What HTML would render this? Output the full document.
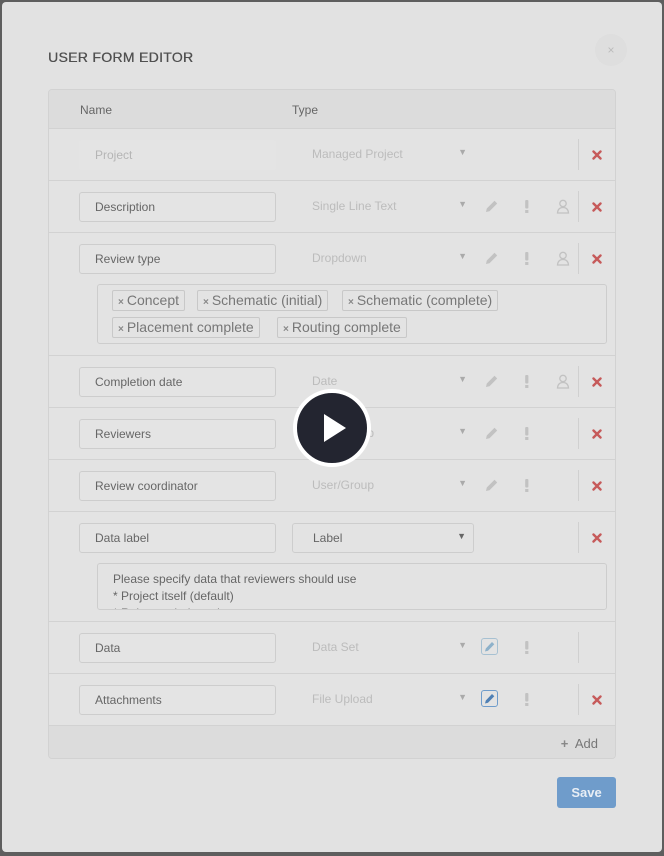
<!DOCTYPE html>
<html><head><style>
*{box-sizing:border-box;margin:0;padding:0}
body{width:664px;height:856px;background:#5e5e5e;font-family:"Liberation Sans",sans-serif;position:relative;overflow:hidden}
.modal{position:absolute;left:2px;top:2px;width:660px;height:850px;background:#e2e2e2;border-radius:4px}
.abs{position:absolute}
h1{position:absolute;left:46px;top:47px;font-size:14px;font-weight:normal;color:#505050;letter-spacing:.3px;text-shadow:0.3px 0 0 #505050}
.close{position:absolute;left:593px;top:32px;width:32px;height:32px;border-radius:50%;background:#dedede;color:#bbb;font-size:12px;text-align:center;line-height:32px}
.tbl{position:absolute;left:46px;top:87px;width:568px;height:670px;border:1px solid #d2d2d2;border-radius:4px;background:#e3e3e3;overflow:hidden}
.row{position:absolute;left:0;width:566px;border-top:1px solid #d2d2d2}
.hd{top:0;height:38px;background:#dcdcdc;border-top:none}
.hd span{position:absolute;top:13px;font-size:12px;color:#666}
.inp{position:absolute;left:30px;width:197px;height:30px;border:1px solid #cdcdcd;border-radius:3px;background:#e4e4e4;font-size:12px;color:#666;padding-left:15px;line-height:28px}
.sel{position:absolute;left:243px;width:182px;height:30px;font-size:12px;color:#bcbcbc;padding-left:20px;line-height:28px;border-radius:3px}
.sel.on{border:1px solid #cdcdcd;color:#666}
.sel i{position:absolute;right:7px;top:-2px;font-style:normal;font-size:9px;color:#aaa}
.sel.on i{color:#666}
.ic{position:absolute}
.div{position:absolute;left:529px;width:1px;height:31px;background:#d0d0d0}
.x{position:absolute;left:543px}
.tags{position:absolute;left:48px;top:51px;width:510px;height:60px;border:1px solid #cdcdcd;border-radius:3px}
.tag{position:absolute;height:21px;border:1px solid #c8c8c8;border-radius:2px;font-size:14px;color:#777;padding:0 5px;line-height:19px}
.tag b{font-size:10px;color:#888;margin-right:3px}
.ta{position:absolute;left:48px;top:51px;width:510px;height:47px;border:1px solid #cdcdcd;border-radius:3px;font-size:12px;color:#666;padding:7px 15px;line-height:17px;overflow:hidden}
.pen{position:absolute;left:432px;width:17px;height:17px;border:1px solid #8fb4cc;border-radius:3px}
</style></head><body>
<svg width="0" height="0" style="position:absolute">
<defs>
<g id="pencil"><path d="M3 14 L3.8 10.5 L11.5 2.8 L14.2 5.5 L6.5 13.2 Z" fill="#c2c2c2"/></g>
<g id="excl"><rect x="6.2" y="2" width="3.2" height="8.5" rx="1" fill="#c2c2c2"/><rect x="6.2" y="12" width="3.2" height="3" fill="#c2c2c2"/></g>
<g id="person"><circle cx="8" cy="5.5" r="3.2" fill="none" stroke="#c2c2c2" stroke-width="1.3"/><path d="M2.5 15 Q3 9.5 8 9.5 Q13 9.5 13.5 15 Z" fill="none" stroke="#c2c2c2" stroke-width="1.3"/></g>
<g id="rx"><path d="M1.5 1.5 L8.5 8.5 M8.5 1.5 L1.5 8.5" stroke="#c65a5a" stroke-width="2.4" stroke-linecap="round"/></g>
</defs></svg>
<div class="modal">
<h1>USER FORM EDITOR</h1>
<div class="close">×</div>
<div class="tbl">
<div class="row hd"><span style="left:31px">Name</span><span style="left:243px">Type</span></div>

<div class="row" style="top:38px;height:52px">
 <div class="inp" style="top:11px;border-color:transparent;color:#b5b5b5">Project</div>
 <div class="sel" style="top:11px">Managed Project<i>▼</i></div>
 <div class="div" style="top:10px"></div><svg class="x" style="top:21px" width="10" height="10"><use href="#rx"/></svg>
</div>

<div class="row" style="top:90px;height:52px">
 <div class="inp" style="top:11px">Description</div>
 <div class="sel" style="top:11px">Single Line Text<i>▼</i></div>
 <svg class="ic" style="left:434px;top:17px" width="16" height="16"><use href="#pencil"/></svg><svg class="ic" style="left:470px;top:17px" width="16" height="16"><use href="#excl"/></svg><svg class="ic" style="left:506px;top:17px" width="16" height="16"><use href="#person"/></svg>
 <div class="div" style="top:10px"></div><svg class="x" style="top:21px" width="10" height="10"><use href="#rx"/></svg>
</div>

<div class="row" style="top:142px;height:123px">
 <div class="inp" style="top:11px">Review type</div>
 <div class="sel" style="top:11px">Dropdown<i>▼</i></div>
 <svg class="ic" style="left:434px;top:17px" width="16" height="16"><use href="#pencil"/></svg><svg class="ic" style="left:470px;top:17px" width="16" height="16"><use href="#excl"/></svg><svg class="ic" style="left:506px;top:17px" width="16" height="16"><use href="#person"/></svg>
 <div class="div" style="top:10px"></div><svg class="x" style="top:21px" width="10" height="10"><use href="#rx"/></svg>
 <div class="tags">
  <div class="tag" style="left:14px;top:5px"><b>×</b>Concept</div>
  <div class="tag" style="left:99px;top:5px"><b>×</b>Schematic (initial)</div>
  <div class="tag" style="left:244px;top:5px"><b>×</b>Schematic (complete)</div>
  <div class="tag" style="left:14px;top:32px"><b>×</b>Placement complete</div>
  <div class="tag" style="left:179px;top:32px"><b>×</b>Routing complete</div>
 </div>
</div>

<div class="row" style="top:265px;height:52px">
 <div class="inp" style="top:11px">Completion date</div>
 <div class="sel" style="top:11px">Date<i>▼</i></div>
 <svg class="ic" style="left:434px;top:17px" width="16" height="16"><use href="#pencil"/></svg><svg class="ic" style="left:470px;top:17px" width="16" height="16"><use href="#excl"/></svg><svg class="ic" style="left:506px;top:17px" width="16" height="16"><use href="#person"/></svg>
 <div class="div" style="top:10px"></div><svg class="x" style="top:21px" width="10" height="10"><use href="#rx"/></svg>
</div>

<div class="row" style="top:317px;height:52px">
 <div class="inp" style="top:11px">Reviewers</div>
 <div class="sel" style="top:11px">User/Group<i>▼</i></div>
 <svg class="ic" style="left:434px;top:17px" width="16" height="16"><use href="#pencil"/></svg><svg class="ic" style="left:470px;top:17px" width="16" height="16"><use href="#excl"/></svg>
 <div class="div" style="top:10px"></div><svg class="x" style="top:21px" width="10" height="10"><use href="#rx"/></svg>
</div>

<div class="row" style="top:369px;height:52px">
 <div class="inp" style="top:11px">Review coordinator</div>
 <div class="sel" style="top:11px">User/Group<i>▼</i></div>
 <svg class="ic" style="left:434px;top:17px" width="16" height="16"><use href="#pencil"/></svg><svg class="ic" style="left:470px;top:17px" width="16" height="16"><use href="#excl"/></svg>
 <div class="div" style="top:10px"></div><svg class="x" style="top:21px" width="10" height="10"><use href="#rx"/></svg>
</div>

<div class="row" style="top:421px;height:110px">
 <div class="inp" style="top:11px">Data label</div>
 <div class="sel on" style="top:11px">Label<i>▼</i></div>
 <div class="div" style="top:10px"></div><svg class="x" style="top:21px" width="10" height="10"><use href="#rx"/></svg>
 <div class="ta">Please specify data that reviewers should use<br>* Project itself (default)<br>* Release chain tool set</div>
</div>

<div class="row" style="top:531px;height:52px">
 <div class="inp" style="top:11px">Data</div>
 <div class="sel" style="top:11px">Data Set<i>▼</i></div>
 <div class="pen" style="top:16px;opacity:.7"><svg width="15" height="15"><path d="M3 12.5 L3.8 9.5 L10 3 L12.3 5.3 L6 11.7 Z" fill="#6a9cc0"/></svg></div><svg class="ic" style="left:470px;top:17px" width="16" height="16"><use href="#excl"/></svg>
 <div class="div" style="top:10px"></div>
</div>

<div class="row" style="top:583px;height:52px">
 <div class="inp" style="top:11px">Attachments</div>
 <div class="sel" style="top:11px">File Upload<i>▼</i></div>
 <div class="pen" style="top:16px;border-color:#6f9ccb"><svg width="15" height="15"><path d="M3 12.5 L3.8 9.5 L10 3 L12.3 5.3 L6 11.7 Z" fill="#4f80b5"/></svg></div><svg class="ic" style="left:470px;top:17px" width="16" height="16"><use href="#excl"/></svg>
 <div class="div" style="top:10px"></div><svg class="x" style="top:21px" width="10" height="10"><use href="#rx"/></svg>
</div>

<div class="row" style="top:635px;height:35px;background:#dcdcdc">
 <div class="abs" style="right:17px;top:10px;font-size:13px;color:#777"><b style="color:#888">+</b>&nbsp; Add</div>
</div>
</div>
<div class="abs" style="left:555px;top:775px;width:59px;height:31px;background:#6f9ccb;border-radius:3px;color:#e8eef5;font-size:13px;font-weight:bold;text-align:center;line-height:31px">Save</div>
</div>
<div class="abs" style="left:293px;top:389px;width:78px;height:78px;border-radius:50%;background:#232530;border:4px solid #fff"></div>
<svg class="abs" style="left:293px;top:389px" width="78" height="78"><polygon points="31,25 31,53 53,39" fill="#fff"/></svg>
</body></html>
